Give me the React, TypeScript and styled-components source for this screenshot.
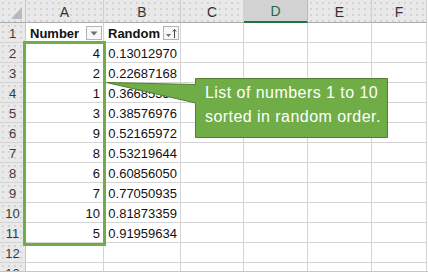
import React from "react";
import styled, { createGlobalStyle, css } from "styled-components";

const Global = createGlobalStyle`
  html, body {
    margin: 0;
    padding: 0;
    background: #ffffff;
  }
`;

const Sheet = styled.div`
  position: relative;
  width: 428px;
  height: 271px;
  overflow: hidden;
  border-bottom: 1px solid #c6c6c6;
  display: grid;
  grid-template-columns: 26px 78px 77px 63px 64px 64px 55px;
  grid-template-rows: 23px repeat(13, 20px);
  background: #ffffff;
  font-family: "Liberation Sans", Arial, sans-serif;
`;

const headerBg = css`
  background-color: #e9e9e9;
  background-image: radial-gradient(circle, #d3d3d3 0.7px, transparent 0.9px);
  background-size: 6px 6px;
`;

const Corner = styled.div`
  ${headerBg};
  border-right: 1px solid #c8c8c8;
  border-bottom: 1px solid #ababab;
  display: flex;
  align-items: flex-end;
  justify-content: flex-end;
  padding: 0 3px 3px 0;
`;

const ColHeader = styled.div<{ $selected?: boolean }>`
  ${headerBg};
  border-right: 1px solid #cfcfcf;
  border-bottom: 1px solid #ababab;
  display: flex;
  align-items: center;
  justify-content: center;
  padding-top: 1px;
  font-size: 14px;
  color: #333333;
  ${(p) =>
    p.$selected &&
    css`
      background: #d2d2d2;
      border-bottom: 2px solid #217346;
      color: #1e6b43;
      border-right-color: #b8b8b8;
    `}
`;

const RowHeader = styled.div`
  ${headerBg};
  border-right: 1px solid #c8c8c8;
  border-bottom: 1px solid #d4d4d4;
  display: flex;
  align-items: center;
  justify-content: center;
  padding-top: 2px;
  font-size: 13px;
  color: #3a3a3a;
`;

const Cell = styled.div<{ $align?: "left" | "right"; $bold?: boolean }>`
  border-right: 1px solid #d4d4d4;
  border-bottom: 1px solid #d4d4d4;
  display: flex;
  align-items: center;
  justify-content: ${(p) => (p.$align === "right" ? "flex-end" : "flex-start")};
  padding: 2px 3px 0 3px;
  font-size: 13px;
  font-weight: ${(p) => (p.$bold ? 700 : 400)};
  color: #111111;
  white-space: nowrap;
  overflow: hidden;
`;

const HeadCell = styled(Cell)`
  justify-content: space-between;
  padding: 1px 1px 0 4px;
`;

const FilterButton = styled.span`
  width: 16px;
  height: 14px;
  box-sizing: border-box;
  border: 1px solid #b4b4b4;
  background: #f7f7f7;
  display: flex;
  align-items: center;
  justify-content: center;
`;

const Selection = styled.div`
  position: absolute;
  left: 23px;
  top: 41px;
  width: 83px;
  height: 205px;
  box-sizing: border-box;
  border: 3px solid #70ad47;
  pointer-events: none;
`;

const Callout = styled.div`
  position: absolute;
  left: 105px;
  top: 77px;
  width: 285px;
  height: 63px;
`;

const CalloutShape = styled.svg`
  position: absolute;
  left: 0;
  top: 0;
`;

const CalloutText = styled.div`
  position: relative;
  padding: 4px 0 0 100px;
  font-family: "Liberation Sans", Arial, sans-serif;
  font-size: 16px;
  letter-spacing: 0.45px;
  line-height: 24px;
  color: #ffffff;
  white-space: nowrap;
`;

const columns = ["A", "B", "C", "D", "E", "F"];

const rows: { n: string; r: string }[] = [
  { n: "4", r: "0.13012970" },
  { n: "2", r: "0.22687168" },
  { n: "1", r: "0.36685380" },
  { n: "3", r: "0.38576976" },
  { n: "9", r: "0.52165972" },
  { n: "8", r: "0.53219644" },
  { n: "6", r: "0.60856050" },
  { n: "7", r: "0.77050935" },
  { n: "10", r: "0.81873359" },
  { n: "5", r: "0.91959634" },
];

const DropIcon = () => (
  <svg width="8" height="5" viewBox="0 0 8 5">
    <path d="M0.5 0.5 H7.5 L4 4.5 Z" fill="#6f6f6f" />
  </svg>
);

const SortIcon = () => (
  <svg width="12" height="11" viewBox="0 0 12 11">
    <path d="M1 6 H6 L3.5 9 Z" fill="#6f6f6f" />
    <path d="M9.5 10 V1.5 M7.8 3.5 L9.5 1.5 L11.2 3.5" stroke="#4a4a4a" strokeWidth="1" fill="none" />
  </svg>
);

const CornerMark = () => (
  <svg width="11" height="12" viewBox="0 0 11 12">
    <path d="M0 12 H11 V0 Z" fill="#b9b9b9" />
  </svg>
);

const EmptyCells = ({ count }: { count: number }) => (
  <>
    {Array.from({ length: count }).map((_, i) => (
      <Cell key={i} />
    ))}
  </>
);

export default function App() {
  return (
    <>
      <Global />
      <Sheet>
        <Corner>
          <CornerMark />
        </Corner>
        {columns.map((c) => (
          <ColHeader key={c} $selected={c === "D"}>
            {c}
          </ColHeader>
        ))}

        <RowHeader>1</RowHeader>
        <HeadCell $bold>
          Number
          <FilterButton>
            <DropIcon />
          </FilterButton>
        </HeadCell>
        <HeadCell $bold>
          Random
          <FilterButton>
            <SortIcon />
          </FilterButton>
        </HeadCell>
        <EmptyCells count={4} />

        {rows.map((row, i) => (
          <React.Fragment key={i}>
            <RowHeader>{i + 2}</RowHeader>
            <Cell $align="right">{row.n}</Cell>
            <Cell $align="right">{row.r}</Cell>
            <EmptyCells count={4} />
          </React.Fragment>
        ))}

        {[12, 13].map((n) => (
          <React.Fragment key={n}>
            <RowHeader>{n}</RowHeader>
            <EmptyCells count={6} />
          </React.Fragment>
        ))}

        <Selection />

        <Callout>
          <CalloutShape width="285" height="63" viewBox="0 0 285 63">
            <path
              d="M90.5 1.5 H282.5 V60.5 H90.5 V26 L1.5 5.5 L90.5 7.5 Z"
              fill="#70ad47"
              stroke="#507e32"
              strokeWidth="1"
            />
          </CalloutShape>
          <CalloutText>
            List of numbers 1 to 10
            <br />
            sorted in random order.
          </CalloutText>
        </Callout>
      </Sheet>
    </>
  );
}
